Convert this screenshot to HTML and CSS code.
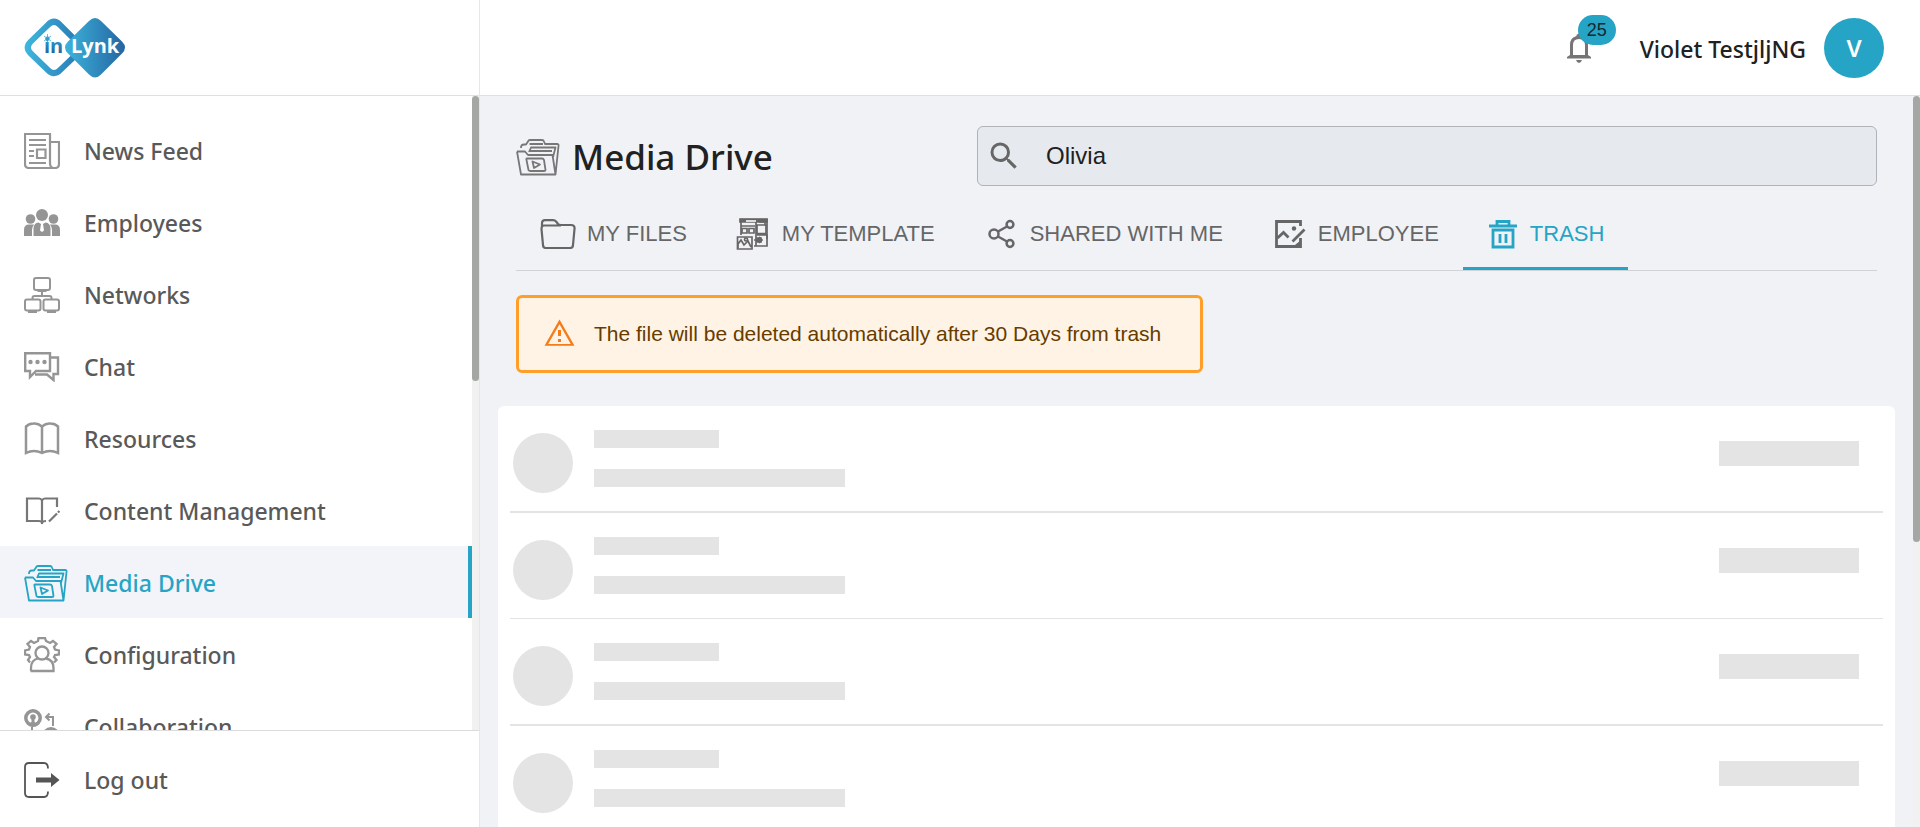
FILE: index.html
```html
<!DOCTYPE html>
<html lang="en">
<head>
<meta charset="utf-8">
<title>Media Drive</title>
<link rel="stylesheet" href="styles.css">
</head>
<body>
<div class="app">
  <aside class="sidebar">
    <a class="brand" href="#" aria-label="inLynk home">
      <svg width="102" height="60" viewBox="0 0 102 60">
        <defs>
          <linearGradient id="ring" gradientUnits="userSpaceOnUse" x1="0" y1="0" x2="58" y2="0"><stop offset="0" stop-color="#3fb8dd"/><stop offset="1" stop-color="#2877b4"/></linearGradient>
          <linearGradient id="solid" gradientUnits="userSpaceOnUse" x1="40" y1="0" x2="101" y2="0"><stop offset="0" stop-color="#3db5db"/><stop offset="1" stop-color="#2465a3"/></linearGradient>
          <linearGradient id="word" gradientUnits="userSpaceOnUse" x1="0" y1="20" x2="0" y2="36"><stop offset="0" stop-color="#2fa3cf"/><stop offset="1" stop-color="#255f9e"/></linearGradient>
        </defs>
        <path d="M24 6.800Q30 .8 36 6.800L53 23.800Q59 29.800 53 35.800L36 52.200Q30 58.200 24 52.200L6.800 35.500Q.8 29.500 6.800 23.500Z" fill="#fff" stroke="url(#ring)" stroke-width="6"/>
        <path d="M65 3Q71 -3 77 3L98 23.500Q104 29.500 98 35.500L77 56.500Q71 62.500 65 56.500L44 35.500Q38 29.500 44 23.500Z" fill="url(#solid)"/>
        <g stroke="#3fa9cf" stroke-width=".8"><path d="M23.500 16v8M20 18l7 5M27 18l-7 5"/><circle cx="23.500" cy="20.500" r="1.800" fill="#2f9fcb"/></g>
        <text class="logo-in" x="20" y="35" fill="url(#word)">in</text>
        <text class="logo-lynk" x="47" y="35">Lynk</text>
      </svg>
    </a>
    <div class="nav-area">
      <nav class="nav">
        <a class="nav-item" href="#"><span class="nav-icon"><svg width="36" height="36" viewBox="0 0 36 36" fill="none" stroke="currentColor" stroke-width="2.200"><path d="M26 30V1H1V31Q1 35 5 35H31Q35 35 35 31V9H26M26 30Q26 35 30 35M5 7H22M5 12H22M5 18H10M5 23H10M5 30H22M13 16.500H21.500V25H13Z"/></svg></span>News Feed</a>
        <a class="nav-item" href="#"><span class="nav-icon"><svg width="36" height="28" viewBox="0 0 36 28" fill="currentColor"><circle cx="18" cy="6" r="6"/><circle cx="6.500" cy="10" r="4.800"/><circle cx="29.500" cy="10" r="4.800"/><path d="M0 27V21Q0 15.500 5 15.500H10Q8 18 8 21V27ZM36 27V21Q36 15.500 31 15.500H26Q28 18 28 21V27ZM9.500 27V20Q9.500 14 14.500 13.500L17 15 16 21.500 18 23 20 21.500 19 15 21.500 13.500Q26.500 14 26.500 20V27Z"/></svg></span>Employees</a>
        <a class="nav-item" href="#"><span class="nav-icon"><svg width="36" height="36" viewBox="0 0 36 36" fill="none" stroke="currentColor" stroke-width="2"><rect x="10" y="1" width="16" height="12" rx="2"/><rect x="1" y="22.500" width="15.500" height="11" rx="2"/><rect x="19.500" y="22.500" width="15.500" height="11" rx="2"/><path d="M13.500 14H22.500M18 14V19M8.500 22V21Q8.500 19 10.500 19H25.500Q27.500 19 27.500 21V22M4 35H13M23 35H32"/></svg></span>Networks</a>
        <a class="nav-item" href="#"><span class="nav-icon"><svg width="36" height="30" viewBox="0 0 36 30" fill="none" stroke="currentColor" stroke-width="2.400"><path d="M1.200 1.200H26V19H12L6 25V19H1.200ZM26 5.500H34V22H29.500V28L23 22.500H11"/><g fill="currentColor" stroke="none"><circle cx="6.500" cy="10" r="2.200"/><circle cx="13.500" cy="10" r="2.200"/><circle cx="20.500" cy="10" r="2.200"/></g></svg></span>Chat</a>
        <a class="nav-item" href="#"><span class="nav-icon"><svg width="36" height="34" viewBox="0 0 36 34" fill="none" stroke="currentColor" stroke-width="2.500"><path d="M18 4.500Q14 1 9.500 1.500 5 1.500 2 4.500V31Q10 27 18 31 26 27 34 31V4.500Q31 1.500 26.500 1.500 22 1 18 4.500V31"/></svg></span>Resources</a>
        <a class="nav-item" href="#"><span class="nav-icon nav-icon-dark"><svg width="36" height="28" viewBox="0 0 36 28" fill="none" stroke="currentColor" stroke-width="2.200"><path d="M18 27V3.500Q17 1.500 15 1.500H3V24H15Q17 24 18 25.500 19 24 22 24M18 3.500Q19 1.500 21 1.500H33V10M25 24.500 33 16.500M34 15.500 35.500 14"/></svg></span>Content Management</a>
        <a class="nav-item nav-item-active" href="#" aria-current="page"><span class="nav-icon"><svg width="44" height="37" viewBox="0 0 44 37" fill="none" stroke="currentColor" stroke-width="1.800" stroke-linejoin="round"><path d="M5 9Q5 5.500 8 5.500H10L12 2.500Q12.500 1 14 1H26Q27.500 1 28 2.500L29 5H41Q43 5 42.500 7L39.500 35.500M13.500 5H27M1 12.500H9L12 16H36.500L39.500 35.500H5L1 12.500M13 13 15 8.500H39.500L37 18M14 12H36M11 19.500H26Q27.500 19.500 28 21L29.500 31Q29.500 32 28 32H14.500Q13 32 12.500 31L10.500 21Q10 19.500 11 19.500ZM16.500 22.500 24 25.500 18 29Z"/></svg></span>Media Drive</a>
        <a class="nav-item" href="#"><span class="nav-icon"><svg width="36" height="36" viewBox="0 0 36 36" fill="none" stroke="currentColor" stroke-width="2.300"><circle cx="18" cy="16" r="6.500"/><path d="M7 34V31Q7 23 14 21.500M22 21.500Q29.500 23 29.500 31V34H6.500M6 25.500 4 23 6 20 5 18 1 17.500V13.500L5 12.500 6 10 3.500 7 7 4 10 6 14 4 14.500 1H21L22 4 26 6 29 4 32.500 7 30 10 31 12.500 35 13.500V17.500L31 18 30 20 32.500 23 30 25.500"/></svg></span>Configuration</a>
        <a class="nav-item" href="#"><span class="nav-icon"><svg width="36" height="36" viewBox="0 0 36 36" fill="none" stroke="currentColor" stroke-width="2"><circle cx="9" cy="9" r="7.200" stroke-width="3.500"/><circle cx="9" cy="8" r="2.800" fill="currentColor" stroke="none"/><path d="M7.500 9H10.500V13L15 15.500Q9 20 3 15.500L7.500 13Z" fill="currentColor" stroke="none"/><path d="M8 18V26H16M22 8H29V17M25.500 4.500 22 8 25.500 11.500"/><circle cx="27" cy="27" r="8" fill="currentColor"/></svg></span>Collaboration</a>
      </nav>
      <div class="scroll-track"><div class="scroll-thumb thumb-nav"></div></div>
    </div>
    <button class="logout" type="button"><span class="nav-icon"><svg width="36" height="36" viewBox="0 0 36 36" fill="none" stroke="currentColor" stroke-width="1.800"><path d="M24 6.500Q24 1 20 1H5Q1 1 1 5V31Q1 35 5 35H20Q24 35 24 29.500"/><path d="M12 15.500H27V11L35.500 18 27 25V20.500H12Z" fill="currentColor" stroke="none"/></svg></span>Log out</button>
  </aside>

  <div class="page">
    <header class="topbar">
      <button class="bell" type="button" aria-label="Notifications">
        <svg width="24" height="30" viewBox="0 0 24 30"><path d="M3 22V12Q3 4.500 9.500 3V2Q12 -1 14.500 2V3Q21 4.500 21 12V22L24 24V25.500H0V24ZM6 22H18V12Q18 6 12 6T6 12ZM9 27H15Q14 30 12 30T9 27Z" fill="currentColor" fill-rule="evenodd"/></svg>
        <span class="badge">25</span>
      </button>
      <span class="user-name">Violet TestjljNG</span>
      <span class="avatar">V</span>
    </header>
    <div class="content">
      <main class="main">
        <div class="controls">
          <div class="title-row">
            <h1 class="title"><svg width="44" height="37" viewBox="0 0 44 37" fill="none" stroke="#777" stroke-width="1.800" stroke-linejoin="round"><path d="M5 9Q5 5.500 8 5.500H10L12 2.500Q12.500 1 14 1H26Q27.500 1 28 2.500L29 5H41Q43 5 42.500 7L39.500 35.500M13.500 5H27M1 12.500H9L12 16H36.500L39.500 35.500H5L1 12.500M13 13 15 8.500H39.500L37 18M14 12H36M11 19.500H26Q27.500 19.500 28 21L29.500 31Q29.500 32 28 32H14.500Q13 32 12.500 31L10.500 21Q10 19.500 11 19.500ZM16.500 22.500 24 25.500 18 29Z"/></svg>Media Drive</h1>
            <label class="search">
              <svg width="36" height="36" viewBox="0 0 24 24" fill="#666"><path d="M15.500 14h-.79l-.28-.27A6.470 6.470 0 0 0 16 9.500 6.500 6.500 0 1 0 9.500 16c1.610 0 3.090-.59 4.230-1.570l.27.28v.79l5 4.990L20.490 19l-4.990-5zm-6 0C7.010 14 5 11.990 5 9.500S7.010 5 9.500 5 14 7.010 14 9.500 11.990 14 9.500 14z"/></svg>
              <input class="search-input" type="text" value="Olivia" aria-label="Search">
            </label>
          </div>
          <div class="tabs" role="tablist">
            <button class="tab" type="button" role="tab"><svg width="36" height="30" viewBox="0 0 36 30" fill="none" stroke="currentColor" stroke-width="2.200"><path d="M2 8V4Q2 1.200 5 1.200H13Q15 1.200 16.500 3L18 5Q19 6 21 6H31Q35 6 34.500 10L33 26Q33 29 30 29H6Q3 29 3 26L1.500 10Q1.500 6.500 4 6.500H21"/></svg>MY FILES</button>
            <button class="tab" type="button" role="tab"><svg width="36" height="32" viewBox="0 0 36 32" fill="none" stroke="currentColor" stroke-width="1.700"><path d="M6 17V1.500H32V28H19"/><path d="M5 1H32V4H5Z" fill="currentColor"/><path d="M11 3H21" stroke="#f0f2f6"/><path d="M6 8H20M21 4V28M7 10.500H12V15H7ZM14 10.500H19V15H14ZM22 7H31V15.500H22ZM24 4H30V7M2.500 19H17V31H2.500ZM3 30V26L6 22 9 27 13 23 16 29M22 17H32V21M19 22H27M24 19 27 22 24 25"/><circle cx="11" cy="21.500" r="1.500"/><path d="M22 20H26V24H22Z" fill="currentColor"/></svg>MY TEMPLATE</button>
            <button class="tab" type="button" role="tab"><svg width="36" height="30" viewBox="0 0 36 30" fill="none" stroke="currentColor" stroke-width="2.500"><circle cx="11" cy="15" r="4.500"/><circle cx="27" cy="5.500" r="3.400"/><circle cx="27" cy="24.500" r="3.400"/><path d="M15 12.500 24 7.500M15 17.500 24 22.500"/></svg>SHARED WITH ME</button>
            <button class="tab" type="button" role="tab"><svg width="36" height="30" viewBox="0 0 36 30" fill="none" stroke="currentColor" stroke-width="2.800"><path d="M29.500 7V2.500H5.500V27.500H29.500V19M6.500 19 12.500 13.500 17.500 18.500M21.500 22.500 33.500 10.500"/><circle cx="23" cy="9.500" r="2.200" fill="currentColor" stroke="none"/><path d="M24 26 30 21V27Z" fill="currentColor" stroke="none"/></svg>EMPLOYEE</button>
            <button class="tab tab-active" type="button" role="tab" aria-selected="true"><svg width="32" height="30" viewBox="0 0 32 30" fill="none" stroke="currentColor" stroke-width="2.800"><path d="M2 7H30M10 7V2.500H22V7M6 11H26V28H6ZM13 15V24M19 15V24"/></svg>TRASH</button>
          </div>
          <div class="alert" role="alert"><svg width="33" height="33" viewBox="0 0 22 22" fill="#f57c1a"><path d="M11 4.240l7.530 13.010H3.470L11 4.240M11 1 1 18.500h20L11 1zm1 13h-2v2h2v-2zm0-6h-2v4h2V8z"/></svg>The file will be deleted automatically after 30 Days from trash</div>
        </div>
        <section class="card" aria-label="Loading files">
          <div class="row"><div class="dot"></div><div class="lines"><div class="line line-short"></div><div class="line"></div></div><div class="block"></div></div>
          <div class="row"><div class="dot"></div><div class="lines"><div class="line line-short"></div><div class="line"></div></div><div class="block"></div></div>
          <div class="row"><div class="dot"></div><div class="lines"><div class="line line-short"></div><div class="line"></div></div><div class="block"></div></div>
          <div class="row"><div class="dot"></div><div class="lines"><div class="line line-short"></div><div class="line"></div></div><div class="block"></div></div>
        </section>
      </main>
      <div class="scroll-track"><div class="scroll-thumb thumb-page"></div></div>
    </div>
  </div>
</div>
</body>
</html>
```
FILE: styles.css
```css
* { box-sizing: border-box; }

body {
  margin: 0;
  color: #212121;
  font-family: "Liberation Sans", Arial, sans-serif;
}

button {
  border: 0;
  padding: 0;
  background: none;
  font: inherit;
  color: inherit;
  cursor: pointer;
}

svg { display: block; flex: none; }

.app {
  display: flex;
  height: 100vh;
  overflow: hidden;
}

/* Sidebar */
.sidebar {
  display: flex;
  flex: none;
  flex-direction: column;
  width: 480px;
  border-right: 1px solid #e6e6e6;
  background: #fff;
}

.brand {
  display: block;
  flex: none;
  height: 96px;
  padding: 18px 24px 0;
  border-bottom: 1px solid #e0e0e0;
}

.logo-in,
.logo-lynk {
  font-family: "Open Sans", "Noto Sans", sans-serif;
  font-weight: 700;
  font-size: 20px;
}

.logo-lynk { fill: #fff; }

.nav-area {
  display: flex;
  flex: 1;
  min-height: 0;
}

.nav {
  flex: 1;
  overflow: hidden;
  padding-top: 18px;
}

.nav-item,
.logout {
  display: flex;
  align-items: center;
  padding: 2px 24px 0;
  color: #595959;
  font-family: "Noto Sans", sans-serif;
  font-size: 23px;
  font-weight: 500;
  text-decoration: none;
}

.nav-item { height: 72px; }

.nav-icon {
  flex: none;
  width: 60px;
  color: #959595;
}

.nav-icon-dark { color: #777; }

.nav-item-active {
  border-right: 4px solid #25a4c5;
  background: #f2f4f9;
  color: #25a4c5;
}

.nav-item-active .nav-icon { color: #25a4c5; }

.logout {
  flex: none;
  height: 97px;
  border-top: 1px solid #dcdcdc;
}

.logout .nav-icon { color: #555; }

/* Scroll bars */
.scroll-track {
  flex: none;
  width: 7px;
  background: #f1f1f1;
}

.scroll-thumb {
  border-radius: 4px;
  background: #a5a7a4;
}

.thumb-nav { height: 45%; }
.thumb-page { height: 61%; }

/* Top bar */
.page {
  display: flex;
  flex: 1;
  flex-direction: column;
  min-width: 0;
}

.topbar {
  display: flex;
  flex: none;
  align-items: center;
  justify-content: flex-end;
  height: 96px;
  padding-right: 36px;
  border-bottom: 1px solid #e0e0e0;
  background: #fff;
}

.bell {
  position: relative;
  margin-right: 49px;
  color: #757575;
}

.badge {
  position: absolute;
  top: -18px;
  left: 11px;
  width: 38px;
  border-radius: 15px;
  background: #25a4c5;
  color: #15282e;
  font-size: 18px;
  line-height: 30px;
}

.user-name {
  margin-right: 18px;
  padding-top: 2px;
  font-family: "Noto Sans", sans-serif;
  font-size: 23px;
  font-weight: 500;
}

.avatar {
  width: 60px;
  border-radius: 50%;
  background: #25a4c5;
  color: #fff;
  font-family: "Noto Sans", sans-serif;
  font-size: 24px;
  font-weight: 600;
  line-height: 60px;
  text-align: center;
}

/* Content */
.content {
  display: flex;
  flex: 1;
  min-height: 0;
}

.main {
  flex: 1;
  overflow: hidden;
  padding: 30px 18px 0;
  background: #f0f2f6;
}

.controls { padding: 0 18px; }

.title-row {
  display: flex;
  align-items: flex-start;
}

.title {
  display: flex;
  flex: none;
  align-items: center;
  gap: 12px;
  width: 461px;
  margin: 0;
  font-family: "Noto Sans", sans-serif;
  font-size: 35px;
  font-weight: 500;
  line-height: 62px;
}

.search {
  display: flex;
  flex: 1;
  align-items: center;
  gap: 24px;
  height: 60px;
  padding: 0 8px;
  border: 1px solid #b0b4b8;
  border-radius: 6px;
  background: #e6eaee;
}

.search-input {
  flex: 1;
  min-width: 0;
  border: 0;
  padding: 0;
  outline: 0;
  background: none;
  color: #212121;
  font: 24px "Liberation Sans", Arial, sans-serif;
}

.tabs {
  display: flex;
  height: 83px;
  padding-top: 12px;
  border-bottom: 1px solid #d0d3d7;
}

.tab {
  display: flex;
  align-items: center;
  gap: 11px;
  padding: 0 24px;
  border-bottom: 3px solid transparent;
  color: #666;
  font-size: 22px;
  white-space: nowrap;
}

.tab-active {
  border-bottom-color: #25a4c5;
  color: #25a4c5;
}

.alert {
  display: flex;
  align-items: center;
  gap: 18px;
  width: fit-content;
  height: 78px;
  margin: 24px 0 33px;
  padding: 0 39px 0 24px;
  border: 3px solid #ff9f2a;
  border-radius: 6px;
  background: #fff3e5;
  color: #663c00;
  font-size: 21px;
}

/* Loading rows */
.card {
  padding: 0 12px 24px;
  border-radius: 6px;
  background: #fff;
}

.row {
  display: flex;
  align-items: flex-start;
  padding: 24px 24px 24px 3px;
  border-bottom: 2px solid #e4e4e4;
}

.row:nth-child(even) { border-bottom-width: 1px; }

.dot {
  width: 60px;
  height: 60px;
  margin: 3px 0 -6px;
  border-radius: 50%;
  background: #e4e4e4;
}

.lines {
  display: grid;
  gap: 21px;
  width: 251px;
  margin-left: 21px;
}

.line {
  height: 18px;
  background: #e4e4e4;
}

.line-short { width: 125px; }

.block {
  width: 140px;
  height: 25px;
  margin: 11px 0 0 auto;
  background: #e4e4e4;
}
```
